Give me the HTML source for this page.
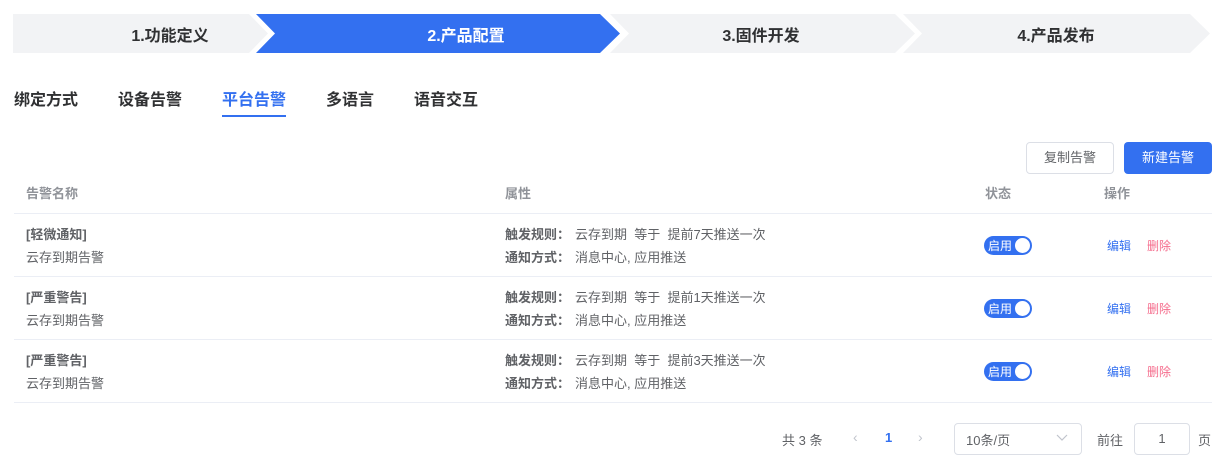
<!DOCTYPE html>
<html><head><meta charset="utf-8"><style>
body{margin:0;width:1225px;height:463px;background:#fff;font-family:"Liberation Sans","Noto Sans CJK SC",sans-serif;position:relative;overflow:hidden;color:#303133}
.a{position:absolute;white-space:nowrap}
.st{font-size:16px;font-weight:bold;top:22px;transform:translateX(-50%)}
.tab{font-size:16px;font-weight:bold;top:86px;color:#303133}
.h{font-size:13px;color:#909399;font-weight:bold;top:183px}
.c{font-size:13px;color:#606266}
.b{font-weight:bold;color:#606266;display:inline-block;width:70px}
.line{position:absolute;left:14px;width:1198px;height:1px;background:#ebeef5}
.tg{position:absolute;left:984px;width:48px;height:19px;border-radius:10px;background:#3370f0}
.tg span{position:absolute;left:4px;top:1px;font-size:12px;color:#fff}
.tg i{position:absolute;right:2px;top:2px;width:15px;height:15px;border-radius:50%;background:#fff}
.ed{font-size:12px;color:#3370f0;left:1107px}
.dl{font-size:12px;color:#f56c8c;left:1147px}
.nb{font-weight:bold;color:#606266}
</style></head><body>
<svg class="a" style="left:0;top:0" width="1225" height="60">
<polygon points="13,14 249,14 268,33.5 249,53 13,53" fill="#f2f3f5"/>
<polygon points="256,14 600,14 620,33.5 600,53 256,53 275,33.5" fill="#3370f0"/>
<polygon points="610,14 895,14 915,33.5 895,53 610,53 629,33.5" fill="#f2f3f5"/>
<polygon points="903,14 1190,14 1210,33.5 1190,53 903,53 922,33.5" fill="#f2f3f5"/>
</svg>
<div class="a st" style="left:170px">1.功能定义</div>
<div class="a st" style="left:466px;color:#fff">2.产品配置</div>
<div class="a st" style="left:761px">3.固件开发</div>
<div class="a st" style="left:1056px">4.产品发布</div>
<div class="a tab" style="left:14px">绑定方式</div>
<div class="a tab" style="left:118px">设备告警</div>
<div class="a tab" style="left:222px;color:#3370f0">平台告警</div>
<div class="a" style="left:222px;top:115px;width:64px;height:2px;background:#3370f0"></div>
<div class="a tab" style="left:326px">多语言</div>
<div class="a tab" style="left:414px">语音交互</div>
<div class="a" style="left:1026px;top:142px;width:86px;height:30px;border:1px solid #dcdfe6;border-radius:4px;font-size:13px;color:#606266;text-align:center;line-height:30px">复制告警</div>
<div class="a" style="left:1124px;top:142px;width:88px;height:32px;background:#3370f0;border-radius:4px;font-size:13px;color:#fff;text-align:center;line-height:32px">新建告警</div>
<div class="a h" style="left:26px">告警名称</div>
<div class="a h" style="left:505px">属性</div>
<div class="a h" style="left:985px">状态</div>
<div class="a h" style="left:1104px">操作</div>
<div class="line" style="top:213px"></div>
<div class="line" style="top:276px"></div>
<div class="line" style="top:339px"></div>
<div class="line" style="top:402px"></div>

<div class="a c nb" style="left:26px;top:224px">[轻微通知]</div>
<div class="a c" style="left:26px;top:247px">云存到期告警</div>
<div class="a c" style="left:505px;top:224px"><span class="b">触发规则：</span>云存到期&nbsp; 等于&nbsp; 提前7天推送一次</div>
<div class="a c" style="left:505px;top:247px"><span class="b">通知方式：</span>消息中心, 应用推送</div>
<div class="tg" style="top:236px"><span>启用</span><i></i></div>
<div class="a ed" style="top:237px">编辑</div><div class="a dl" style="top:237px">删除</div>

<div class="a c nb" style="left:26px;top:287px">[严重警告]</div>
<div class="a c" style="left:26px;top:310px">云存到期告警</div>
<div class="a c" style="left:505px;top:287px"><span class="b">触发规则：</span>云存到期&nbsp; 等于&nbsp; 提前1天推送一次</div>
<div class="a c" style="left:505px;top:310px"><span class="b">通知方式：</span>消息中心, 应用推送</div>
<div class="tg" style="top:299px"><span>启用</span><i></i></div>
<div class="a ed" style="top:300px">编辑</div><div class="a dl" style="top:300px">删除</div>

<div class="a c nb" style="left:26px;top:350px">[严重警告]</div>
<div class="a c" style="left:26px;top:373px">云存到期告警</div>
<div class="a c" style="left:505px;top:350px"><span class="b">触发规则：</span>云存到期&nbsp; 等于&nbsp; 提前3天推送一次</div>
<div class="a c" style="left:505px;top:373px"><span class="b">通知方式：</span>消息中心, 应用推送</div>
<div class="tg" style="top:362px"><span>启用</span><i></i></div>
<div class="a ed" style="top:363px">编辑</div><div class="a dl" style="top:363px">删除</div>

<div class="a c" style="left:782px;top:430px">共 3 条</div>
<div class="a" style="left:853px;top:429px;font-size:14px;color:#c0c4cc">‹</div>
<div class="a" style="left:885px;top:430px;font-size:13px;color:#3370f0;font-weight:bold">1</div>
<div class="a" style="left:918px;top:429px;font-size:14px;color:#c0c4cc">›</div>
<div class="a" style="left:954px;top:423px;width:126px;height:30px;border:1px solid #dcdfe6;border-radius:4px"></div>
<div class="a c" style="left:966px;top:430px">10条/页</div>
<svg class="a" style="left:1056px;top:434px" width="12" height="8"><polyline points="1,1 6,6 11,1" fill="none" stroke="#c0c4cc" stroke-width="1.2"/></svg>
<div class="a c" style="left:1097px;top:430px">前往</div>
<div class="a" style="left:1134px;top:423px;width:54px;height:30px;border:1px solid #dcdfe6;border-radius:4px;text-align:center;line-height:30px;font-size:13px;color:#606266">1</div>
<div class="a c" style="left:1198px;top:430px">页</div>
</body></html>
